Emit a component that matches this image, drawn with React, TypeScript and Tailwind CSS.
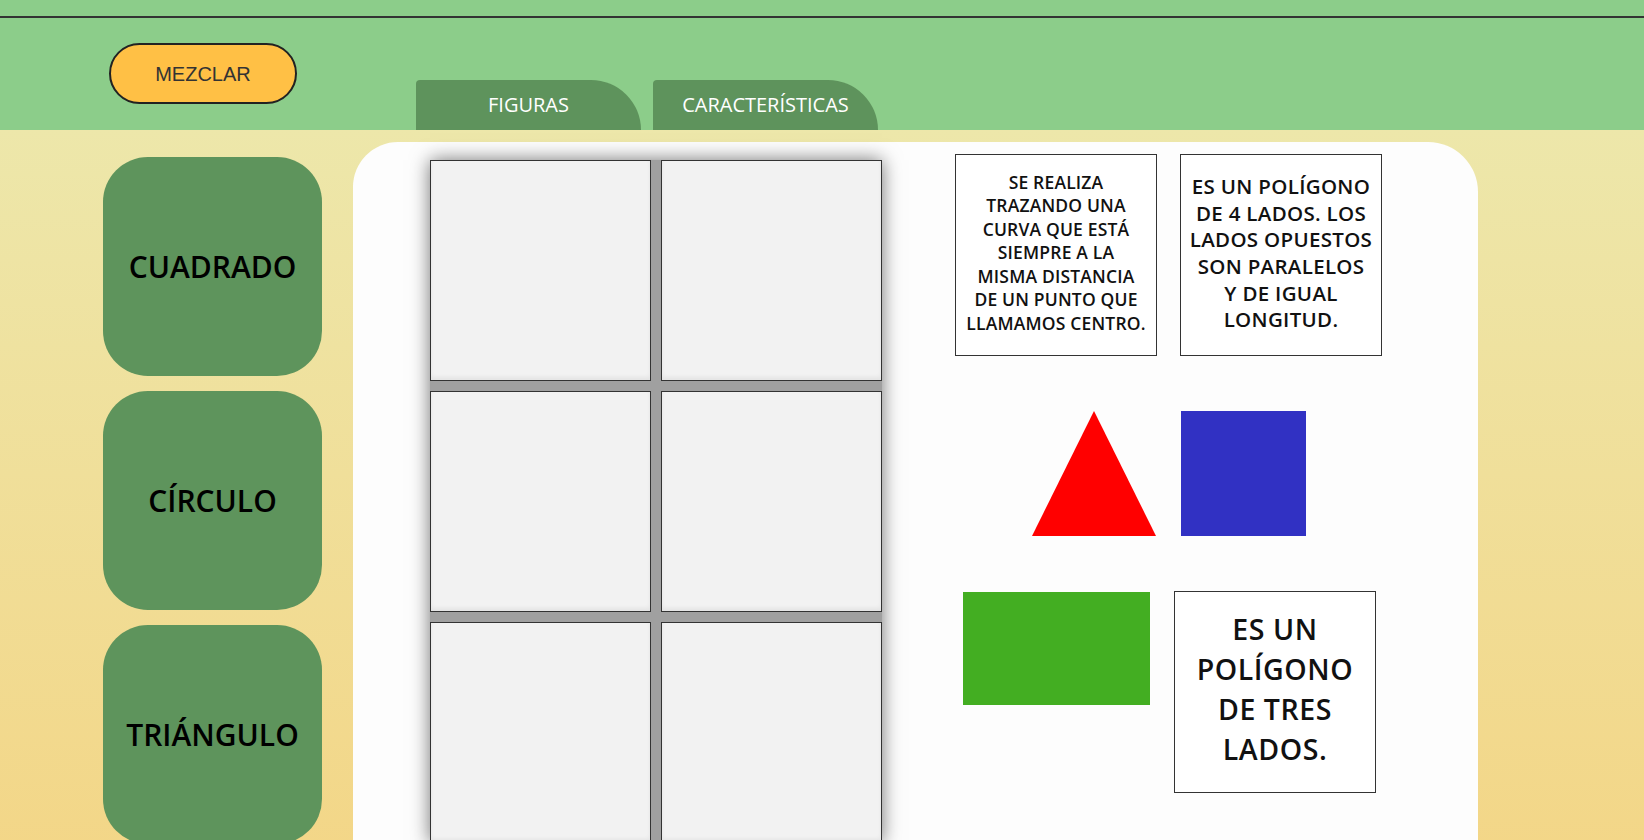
import React from "react"

const figuras = ["CUADRADO", "CÍRCULO", "TRIÁNGULO"]

const Tab = ({ children }: any) => (
  <div className="w-[225px] h-[50px] flex items-center justify-center bg-[#5e935c] rounded-tl-[4px] rounded-tr-[50px] text-white text-[20px] font-['Open_Sans',sans-serif]">
    {children}
  </div>
)

const FiguraCard = ({ label }: any) => (
  <div className="w-[219px] h-[219px] rounded-[45px] bg-[#5e945c] flex items-center justify-center text-black text-[30px] font-semibold font-['Open_Sans',sans-serif]">
    {label}
  </div>
)

const TextCard = ({ lines, className }: any) => (
  <div className={`w-[202px] h-[202px] bg-white border border-[#333] flex flex-col items-center justify-center text-center text-[#111] font-semibold uppercase font-['Open_Sans',sans-serif] ${className}`}>
    {lines.map((l: string) => (
      <span key={l} className="whitespace-nowrap">{l}</span>
    ))}
  </div>
)

export default function App() {
  return (
    <div className="h-[840px] w-full overflow-hidden flex flex-col">
      <header className="h-[130px] shrink-0 bg-[#8ccd8a] pt-4 flex flex-col">
        <div className="h-[2px] bg-[#333]" />
        <div className="flex flex-1">
          <button className="ml-[109px] mt-[25px] h-[61px] w-[188px] rounded-full bg-[#ffc045] border-2 border-[#222] text-[#333] text-[20px] font-['Liberation_Sans',Arial,sans-serif]">
            MEZCLAR
          </button>
          <div className="ml-[119px] self-end flex gap-3">
            <Tab>FIGURAS</Tab>
            <Tab>CARACTERÍSTICAS</Tab>
          </div>
        </div>
      </header>

      <main className="flex-1 flex bg-gradient-to-b from-[#ede7aa] to-[#f3d687]">
        <div className="ml-[103px] mt-[27px] flex flex-col gap-[15px]">
          {figuras.map((f) => (
            <FiguraCard key={f} label={f} />
          ))}
        </div>

        <section className="ml-[31px] mt-3 w-[1125px] h-[720px] bg-[#fdfdfd] rounded-tl-[45px] rounded-tr-[50px] flex">
          <div className="ml-[77px] mt-[18px] self-start grid grid-cols-[221px_221px] gap-[10px] bg-[#a0a0a0] shadow-[0_0_18px_rgba(0,0,0,0.55)]">
            {[0, 1, 2, 3, 4, 5].map((i) => (
              <div key={i} className="w-[221px] h-[221px] bg-[#f2f2f2] border border-[#333] shadow-[inset_0_-3px_4px_rgba(0,0,0,0.06)]" />
            ))}
          </div>

          <div className="ml-[73px] mt-3 flex flex-col">
            <div className="flex gap-[23px]">
              <TextCard
                className="text-[17.5px] leading-[23.5px] tracking-[0.01em] pb-[4px]"
                lines={["Se realiza", "trazando una", "curva que está", "siempre a la", "misma distancia", "de un punto que", "llamamos centro."]}
              />
              <TextCard
                className="text-[20.5px] leading-[26.6px] tracking-[0.015em] pb-1"
                lines={["Es un polígono", "de 4 lados. Los", "lados opuestos", "son paralelos", "y de igual", "longitud."]}
              />
            </div>

            <div className="mt-[55px] ml-[77px] flex gap-[25px]">
              <svg width="124" height="125" viewBox="0 0 124 125">
                <polygon points="62,0 124,125 0,125" fill="#ff0000" />
              </svg>
              <div className="w-[125px] h-[125px] bg-[#3131c3]" />
            </div>

            <div className="mt-[55px] ml-2 flex gap-[24px] items-start">
              <div className="mt-px w-[187px] h-[113px] bg-[#43ae22]" />
              <TextCard
                className="text-[28.5px] leading-[40px] tracking-[0.02em] pb-[6px]"
                lines={["Es un", "polígono", "de tres", "lados."]}
              />
            </div>
          </div>
        </section>
      </main>
    </div>
  )
}
